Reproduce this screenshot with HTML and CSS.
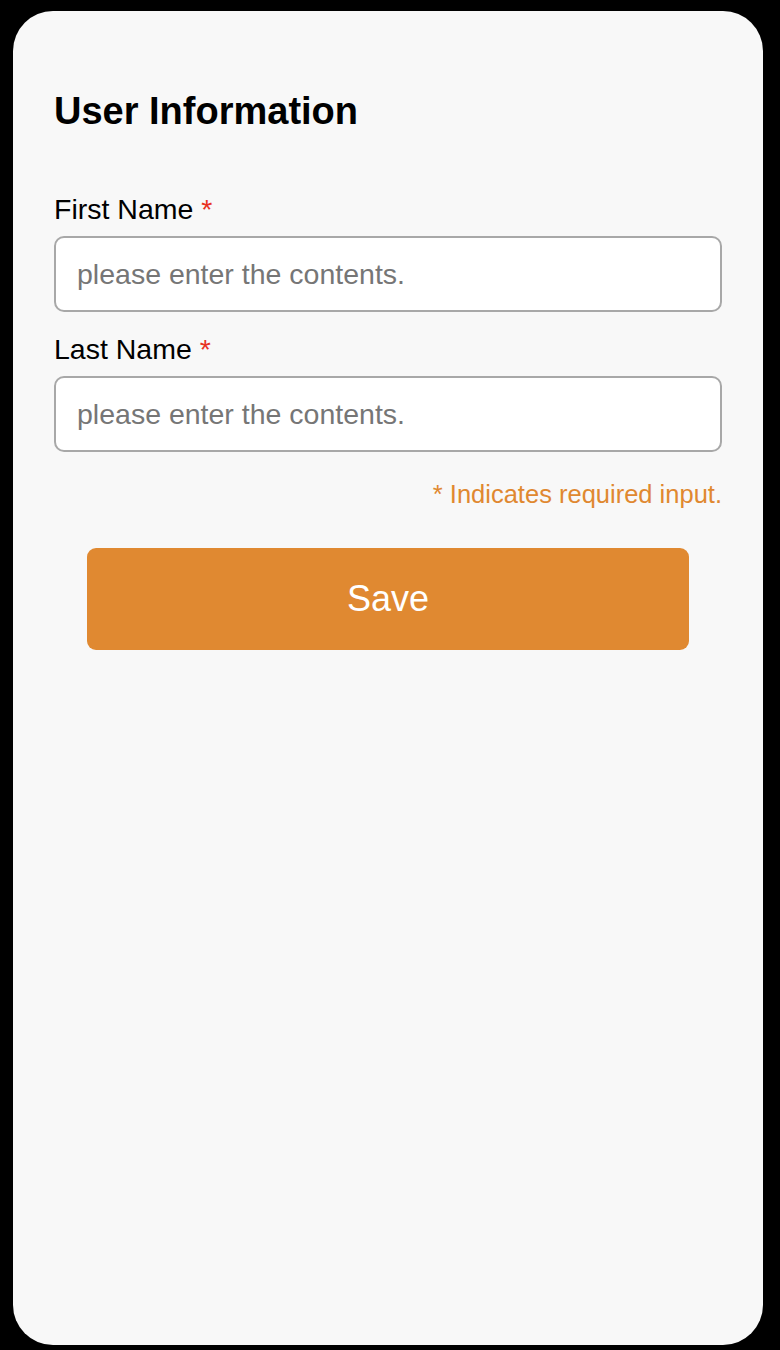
FILE: index.html
```html
<!DOCTYPE html>
<html lang="en">
<head>
<meta charset="utf-8">
<title>User Information</title>
<link rel="stylesheet" href="styles.css">
</head>
<body>
<main class="card">
  <h1 class="title">User Information</h1>
  <form class="form">
    <label class="label" for="first">First Name <span class="req">*</span></label>
    <input class="field" id="first" type="text" placeholder="please enter the contents.">
    <label class="label label-second" for="last">Last Name <span class="req">*</span></label>
    <input class="field" id="last" type="text" placeholder="please enter the contents.">
    <p class="note">* Indicates required input.</p>
    <button class="save" type="button">Save</button>
  </form>
</main>
</body>
</html>
```

FILE: styles.css
```css
html, body {
  margin: 0;
  padding: 0;
  background: #000;
}
body {
  padding: 11px 17px 5px 13px;
  font-family: "Liberation Sans", Arial, Helvetica, sans-serif;
  box-sizing: border-box;
  height: 1350px;
}
.card {
  box-sizing: border-box;
  width: 750px;
  height: 1334px;
  background: #f8f8f8;
  border-radius: 40px;
  padding: 78px 41px 0 41px;
}
.title {
  margin: 0;
  font-size: 38px;
  line-height: 44px;
  font-weight: bold;
  color: #000;
}
.form {
  display: flex;
  flex-direction: column;
  margin-top: 59px;
}
.label {
  font-size: 28.5px;
  line-height: 34px;
  color: #000;
  margin-bottom: 10px;
}
.label-second {
  margin-top: 20px;
}
.req {
  color: #e8321f;
}
.field {
  box-sizing: border-box;
  height: 76px;
  width: 100%;
  border: 2px solid #a8a8a8;
  border-radius: 10px;
  background: #fff;
  padding: 0 21px 0;
  font-family: inherit;
  font-size: 28.5px;
  color: #000;
  outline: none;
}
.field::placeholder {
  color: #767676;
}
.note {
  margin: 27px 0 0;
  text-align: right;
  font-size: 25.5px;
  line-height: 30px;
  color: #e08830;
}
.save {
  margin: 39px 33px 0;
  height: 102px;
  border: none;
  border-radius: 9px;
  background: #e08931;
  color: #fff;
  font-family: inherit;
  font-size: 36px;
  cursor: pointer;
}
```
